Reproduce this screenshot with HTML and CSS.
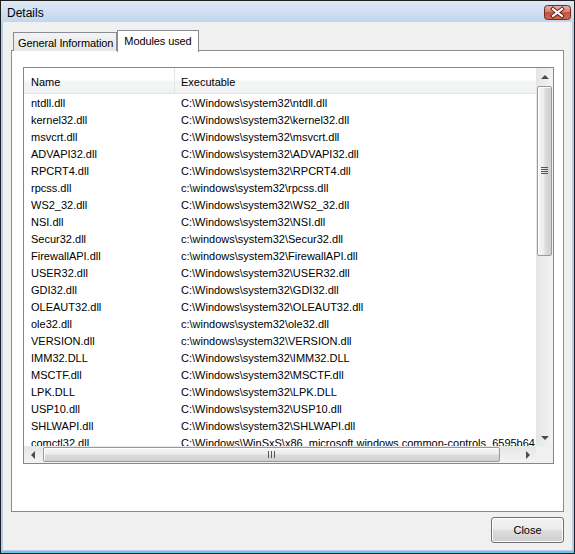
FILE: index.html
```html
<!DOCTYPE html>
<html>
<head>
<meta charset="utf-8">
<link rel="stylesheet" href="styles.css">
</head>
<body>
<div class="window">
  <div class="titlebar">
    <span class="title">Details</span>
    <span class="closex">
      <svg width="27" height="15" viewBox="0 0 27 15">
        <defs>
          <linearGradient id="rg" x1="0" y1="0" x2="0" y2="1">
            <stop offset="0" stop-color="#e8b3a8"/>
            <stop offset="0.45" stop-color="#d4806f"/>
            <stop offset="0.5" stop-color="#c45440"/>
            <stop offset="1" stop-color="#cf6a4f"/>
          </linearGradient>
        </defs>
        <rect x="0.5" y="0.5" width="26" height="14" rx="3" fill="url(#rg)" stroke="#6e2a22"/>
        <path d="M9 4 L18 11 M18 4 L9 11" stroke="#5b1d14" stroke-width="4" stroke-linecap="square"/>
        <path d="M9 4 L18 11 M18 4 L9 11" stroke="#ffffff" stroke-width="2.2" stroke-linecap="square"/>
      </svg>
    </span>
  </div>
  <div class="client">
    <div class="tabs">
      <div class="tab">General Information</div>
      <div class="tab active">Modules used</div>
    </div>
    <div class="panel">
      <div class="listview">
        <div class="lv-content">
          <div class="lv-header">
            <div class="hc c1">Name</div>
            <div class="hc c2">Executable</div>
          </div>
          <div class="row"><div class="c1">ntdll.dll</div><div class="c2">C:\Windows\system32\ntdll.dll</div></div>
          <div class="row"><div class="c1">kernel32.dll</div><div class="c2">C:\Windows\system32\kernel32.dll</div></div>
          <div class="row"><div class="c1">msvcrt.dll</div><div class="c2">C:\Windows\system32\msvcrt.dll</div></div>
          <div class="row"><div class="c1">ADVAPI32.dll</div><div class="c2">C:\Windows\system32\ADVAPI32.dll</div></div>
          <div class="row"><div class="c1">RPCRT4.dll</div><div class="c2">C:\Windows\system32\RPCRT4.dll</div></div>
          <div class="row"><div class="c1">rpcss.dll</div><div class="c2">c:\windows\system32\rpcss.dll</div></div>
          <div class="row"><div class="c1">WS2_32.dll</div><div class="c2">C:\Windows\system32\WS2_32.dll</div></div>
          <div class="row"><div class="c1">NSI.dll</div><div class="c2">C:\Windows\system32\NSI.dll</div></div>
          <div class="row"><div class="c1">Secur32.dll</div><div class="c2">c:\windows\system32\Secur32.dll</div></div>
          <div class="row"><div class="c1">FirewallAPI.dll</div><div class="c2">c:\windows\system32\FirewallAPI.dll</div></div>
          <div class="row"><div class="c1">USER32.dll</div><div class="c2">C:\Windows\system32\USER32.dll</div></div>
          <div class="row"><div class="c1">GDI32.dll</div><div class="c2">C:\Windows\system32\GDI32.dll</div></div>
          <div class="row"><div class="c1">OLEAUT32.dll</div><div class="c2">C:\Windows\system32\OLEAUT32.dll</div></div>
          <div class="row"><div class="c1">ole32.dll</div><div class="c2">c:\windows\system32\ole32.dll</div></div>
          <div class="row"><div class="c1">VERSION.dll</div><div class="c2">c:\windows\system32\VERSION.dll</div></div>
          <div class="row"><div class="c1">IMM32.DLL</div><div class="c2">C:\Windows\system32\IMM32.DLL</div></div>
          <div class="row"><div class="c1">MSCTF.dll</div><div class="c2">C:\Windows\system32\MSCTF.dll</div></div>
          <div class="row"><div class="c1">LPK.DLL</div><div class="c2">C:\Windows\system32\LPK.DLL</div></div>
          <div class="row"><div class="c1">USP10.dll</div><div class="c2">C:\Windows\system32\USP10.dll</div></div>
          <div class="row"><div class="c1">SHLWAPI.dll</div><div class="c2">C:\Windows\system32\SHLWAPI.dll</div></div>
          <div class="row"><div class="c1">comctl32.dll</div><div class="c2">C:\Windows\WinSxS\x86_microsoft.windows.common-controls_6595b64144ccf1df_6.0.6000.16386_none_5d07289e07e1d100\comctl32.dll</div></div>
        </div>
        <div class="vscroll">
          <div class="sbtn"><span class="tri up"></span></div>
          <div class="vtrack">
            <div class="vthumb"><span class="vgrip"></span></div>
          </div>
          <div class="sbtn"><span class="tri down"></span></div>
        </div>
        <div class="hscroll">
          <div class="sbtn"><span class="tri left"></span></div>
          <div class="htrack">
            <div class="hthumb"><span class="hgrip"></span></div>
          </div>
          <div class="sbtn"><span class="tri right"></span></div>
        </div>
        <div class="corner"></div>
      </div>
    </div>
    <div class="footer">
      <button class="btn">Close</button>
    </div>
  </div>
</div>
</body>
</html>
```
FILE: styles.css
```css
* { box-sizing: border-box; }
html, body { margin: 0; padding: 0; background: #ffffff; }
body {
  font-family: "Liberation Sans", Arial, sans-serif;
  font-size: 11px;
  color: #000;
}
.window {
  width: 575px;
  height: 554px;
  border: 1px solid #1e1e1e;
  background: #b4cde9;
  padding: 0 2px 3px 2px;
  display: flex;
  flex-direction: column;
  box-shadow: inset 0 -2px 0 #6cc4e8;
}
.titlebar {
  height: 21px;
  margin: 0 -2px;
  padding: 0 3px 0 6px;
  background: linear-gradient(#dfe9f5, #c2d6ee);
  display: flex;
  align-items: center;
  justify-content: space-between;
}
.title {
  font-size: 12px;
  color: #000;
  padding-top: 2px;
}
.closex { display: flex; padding-top: 2px; }
.closex svg { display: block; }
.client {
  height: 528px;
  background: #f0f0f0;
  padding: 8px 8px 7px 8px;
  display: flex;
  flex-direction: column;
}
.tabs {
  display: flex;
  align-items: flex-end;
  height: 21px;
  padding-left: 2px;
  position: relative;
  z-index: 1;
}
.tab {
  height: 19px;
  padding: 2px 3px 0 4px;
  border: 1px solid #898c95;
  border-bottom: none;
  background: linear-gradient(#f3f3f3, #e6e6e6);
  display: flex;
  align-items: center;
  line-height: 1;
  letter-spacing: -0.1px;
}
.tab.active {
  padding: 0 6px 1px 6px;
  background: #fff;
  border-color: #898c95;
  margin-bottom: -1px;
  height: 22px;
}
.panel {
  height: 462px;
  margin-top: -1px;
  border: 1px solid #898c95;
  background: #fff;
  padding: 16px 9px 0 11px;
}
.listview {
  height: 397px;
  border: 1px solid #828790;
  display: grid;
  grid-template-columns: 1fr 17px;
  grid-template-rows: 1fr 17px;
  background: #fff;
}
.lv-content {
  overflow: hidden;
  min-width: 0;
}
.lv-header {
  height: 26px;
  display: flex;
  background: linear-gradient(#ffffff 0%, #ffffff 45%, #f4f5f6 55%, #f1f2f4 100%);
  border-bottom: 1px solid #e3e4e6;
}
.hc {
  display: flex;
  align-items: center;
  height: 25px;
  padding-top: 2px;
}
.c1 { width: 151px; flex: none; padding-left: 7px; }
.c2 { flex: none; padding-left: 6px; white-space: nowrap; }
.hc.c1 { border-right: 1px solid #e3e4e6; }
.hc.c2 { padding-left: 6px; }
.row {
  height: 17px;
  display: flex;
  align-items: center;
  white-space: nowrap;
  padding-top: 1px;
}
.vscroll {
  display: flex;
  flex-direction: column;
  background: linear-gradient(90deg, #e6e6e6, #f3f3f3);
}
.hscroll {
  display: flex;
  background: linear-gradient(#e6e6e6, #f3f3f3);
  min-width: 0;
}
.corner { background: #f0f0f0; }
.sbtn {
  width: 17px;
  height: 17px;
  flex: none;
  display: flex;
  align-items: center;
  justify-content: center;
}
.tri { width: 0; height: 0; display: block; }
.tri.up { border-left: 4px solid transparent; border-right: 4px solid transparent; border-bottom: 4px solid #4a4a4a; }
.tri.down { border-left: 4px solid transparent; border-right: 4px solid transparent; border-top: 4px solid #4a4a4a; }
.tri.left { border-top: 4px solid transparent; border-bottom: 4px solid transparent; border-right: 4px solid #4a4a4a; }
.tri.right { border-top: 4px solid transparent; border-bottom: 4px solid transparent; border-left: 4px solid #4a4a4a; }
.vtrack { flex: 1; padding: 1px 1px 0 1px; }
.vthumb {
  height: 170px;
  border: 1px solid #9a9a9a;
  border-radius: 2px;
  background: linear-gradient(90deg, #f6f6f6 0%, #ececec 45%, #dcdcdc 55%, #cfcfcf 100%);
  box-shadow: inset 1px 1px 0 #fff;
  display: flex;
  align-items: center;
  justify-content: center;
}
.vgrip {
  width: 7px;
  height: 8px;
  background: repeating-linear-gradient(#555 0 1px, transparent 1px 2px);
}
.htrack { flex: 1; padding: 1px 0 1px 2px; }
.hthumb {
  width: 457px;
  height: 15px;
  border: 1px solid #9a9a9a;
  border-radius: 2px;
  background: linear-gradient(#f6f6f6 0%, #ececec 45%, #dcdcdc 55%, #cfcfcf 100%);
  box-shadow: inset 1px 1px 0 #fff;
  display: flex;
  align-items: center;
  justify-content: center;
}
.hgrip {
  width: 7px;
  height: 7px;
  background: repeating-linear-gradient(90deg, #555 0 1px, transparent 1px 3px);
}
.footer {
  margin-top: 5px;
  display: flex;
  justify-content: flex-end;
}
.btn {
  width: 73px;
  height: 26px;
  font-family: "Liberation Sans", Arial, sans-serif;
  font-size: 11px;
  color: #000;
  border: 1px solid #707070;
  border-radius: 3px;
  background: linear-gradient(#f2f2f2 0%, #ebebeb 49%, #dddddd 50%, #cfcfcf 100%);
  box-shadow: inset 0 0 0 1px #fcfcfc;
  padding: 0;
  margin: 0;
}
```
